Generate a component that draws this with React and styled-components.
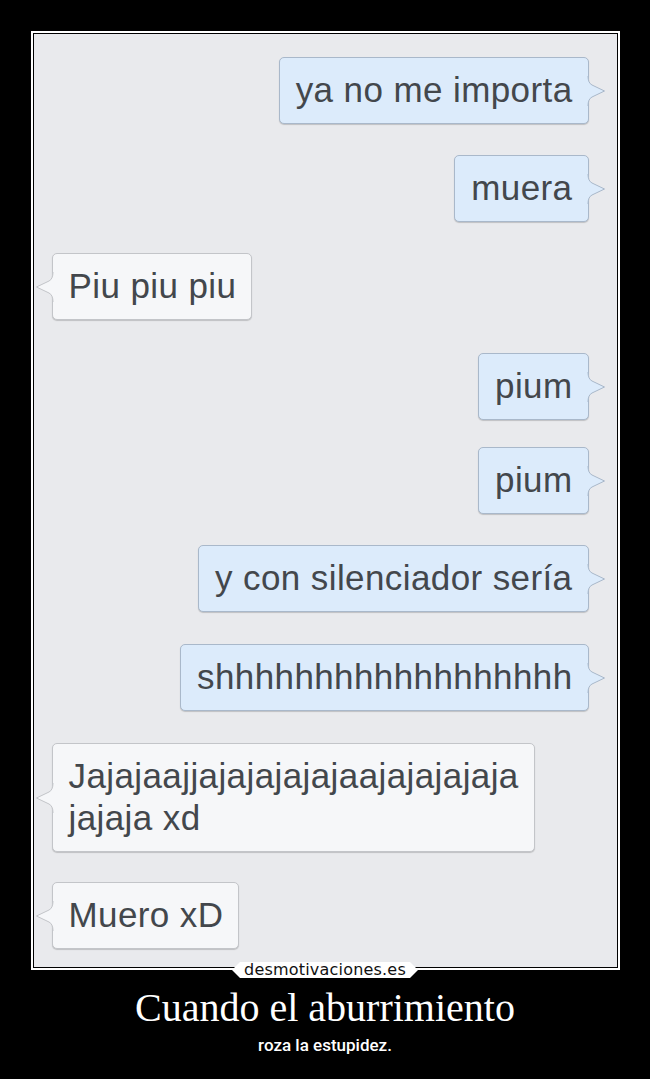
import React from "react";
import styled, { createGlobalStyle } from "styled-components";

const GlobalStyle = createGlobalStyle`
  html, body {
    margin: 0;
    padding: 0;
    background: #000;
  }
`;

const Page = styled.div`
  width: 650px;
  min-height: 1079px;
  background: #000;
  padding-top: 31px;
  display: flex;
  flex-direction: column;
  align-items: center;
`;

const Frame = styled.div`
  position: relative;
  width: 583px;
  border: 2px solid #fff;
  padding: 1px;
  background: #000;
`;

const Chat = styled.div`
  height: 933px;
  background: #e9eaed;
  padding-top: 23px;
  box-sizing: border-box;
  display: flex;
  flex-direction: column;
  overflow: hidden;
`;

const Row = styled.div`
  display: flex;
  justify-content: ${(p) => (p.$me ? "flex-end" : "flex-start")};
  padding: ${(p) => (p.$me ? "0 28px 0 0" : "0 0 0 18px")};
  margin-top: ${(p) => p.$gap}px;
`;

const Bubble = styled.div`
  position: relative;
  padding: 11px 15px 12px 16px;
  border-radius: 5px;
  border: 1px solid ${(p) => (p.$me ? "#a9b8ca" : "#c3c5c9")};
  background: ${(p) => (p.$me ? "#dcebfb" : "#f6f7f9")};
  box-shadow: 0 1px 1px rgba(0, 0, 0, 0.18);
  font-family: "Liberation Sans", Arial, sans-serif;
  font-size: 35px;
  line-height: 42px;
  letter-spacing: 0.4px;
  color: #43474c;
  white-space: nowrap;
`;

const Tail = styled.svg`
  position: absolute;
  top: 50%;
  width: 19px;
  height: 30px;
  margin-top: -15px;
  ${(p) =>
    p.$me
      ? "right: -18px;"
      : "left: -18px; transform: scaleX(-1);"}
`;

const Badge = styled.div`
  position: absolute;
  left: 50%;
  bottom: -10px;
  transform: translateX(-50%);
  width: 186px;
  height: 16px;
  background: #fff;
  clip-path: polygon(0 50%, 8px 0, calc(100% - 8px) 0, 100% 50%, calc(100% - 8px) 100%, 8px 100%);
  display: flex;
  align-items: center;
  justify-content: center;
  font-family: "DejaVu Sans", sans-serif;
  font-size: 16px;
  line-height: 16px;
  letter-spacing: 0.2px;
  color: #111;
`;

const Title = styled.div`
  margin-top: 15px;
  font-family: "Liberation Serif", "Times New Roman", serif;
  font-size: 40px;
  line-height: 46px;
  color: #fff;
  text-align: center;
`;

const Subtitle = styled.div`
  margin-top: 3px;
  font-family: Roboto, "Liberation Sans", sans-serif;
  font-weight: 500;
  font-size: 17px;
  line-height: 22px;
  color: #fff;
  text-align: center;
`;

function BubbleTail({ me }) {
  const fill = me ? "#dcebfb" : "#f6f7f9";
  const stroke = me ? "#a9b8ca" : "#c3c5c9";
  return (
    <Tail $me={me} viewBox="0 0 19 30">
      <path d="M0 0 L1 0 Q1 7 5 9 L17.5 15 L5 21 Q1 23 1 30 L0 30 Z" fill={fill} />
      <path
        d="M1 0 Q1 7 5 9 L17.5 15 L5 21 Q1 23 1 30"
        fill="none"
        stroke={stroke}
        strokeWidth="1"
      />
    </Tail>
  );
}

const messages = [
  { me: true, gap: 0, text: "ya no me importa" },
  { me: true, gap: 31, text: "muera" },
  { me: false, gap: 31, text: "Piu piu piu" },
  { me: true, gap: 33, text: "pium" },
  { me: true, gap: 27, text: "pium" },
  { me: true, gap: 31, text: "y con silenciador sería" },
  { me: true, gap: 32, text: "shhhhhhhhhhhhhhhhhh" },
  { me: false, gap: 32, text: ["Jajajaajjajajajajajaajajajajaja", "jajaja xd"] },
  { me: false, gap: 30, text: "Muero xD" },
];

export default function App() {
  return (
    <>
      <GlobalStyle />
      <Page>
        <Frame>
          <Chat>
            {messages.map((m, i) => (
              <Row key={i} $me={m.me} $gap={m.gap}>
                <Bubble $me={m.me}>
                  {Array.isArray(m.text)
                    ? m.text.map((line, j) => (
                        <React.Fragment key={j}>
                          {j > 0 && <br />}
                          {line}
                        </React.Fragment>
                      ))
                    : m.text}
                  <BubbleTail me={m.me} />
                </Bubble>
              </Row>
            ))}
          </Chat>
          <Badge>desmotivaciones.es</Badge>
        </Frame>
        <Title>Cuando el aburrimiento</Title>
        <Subtitle>roza la estupidez.</Subtitle>
      </Page>
    </>
  );
}
